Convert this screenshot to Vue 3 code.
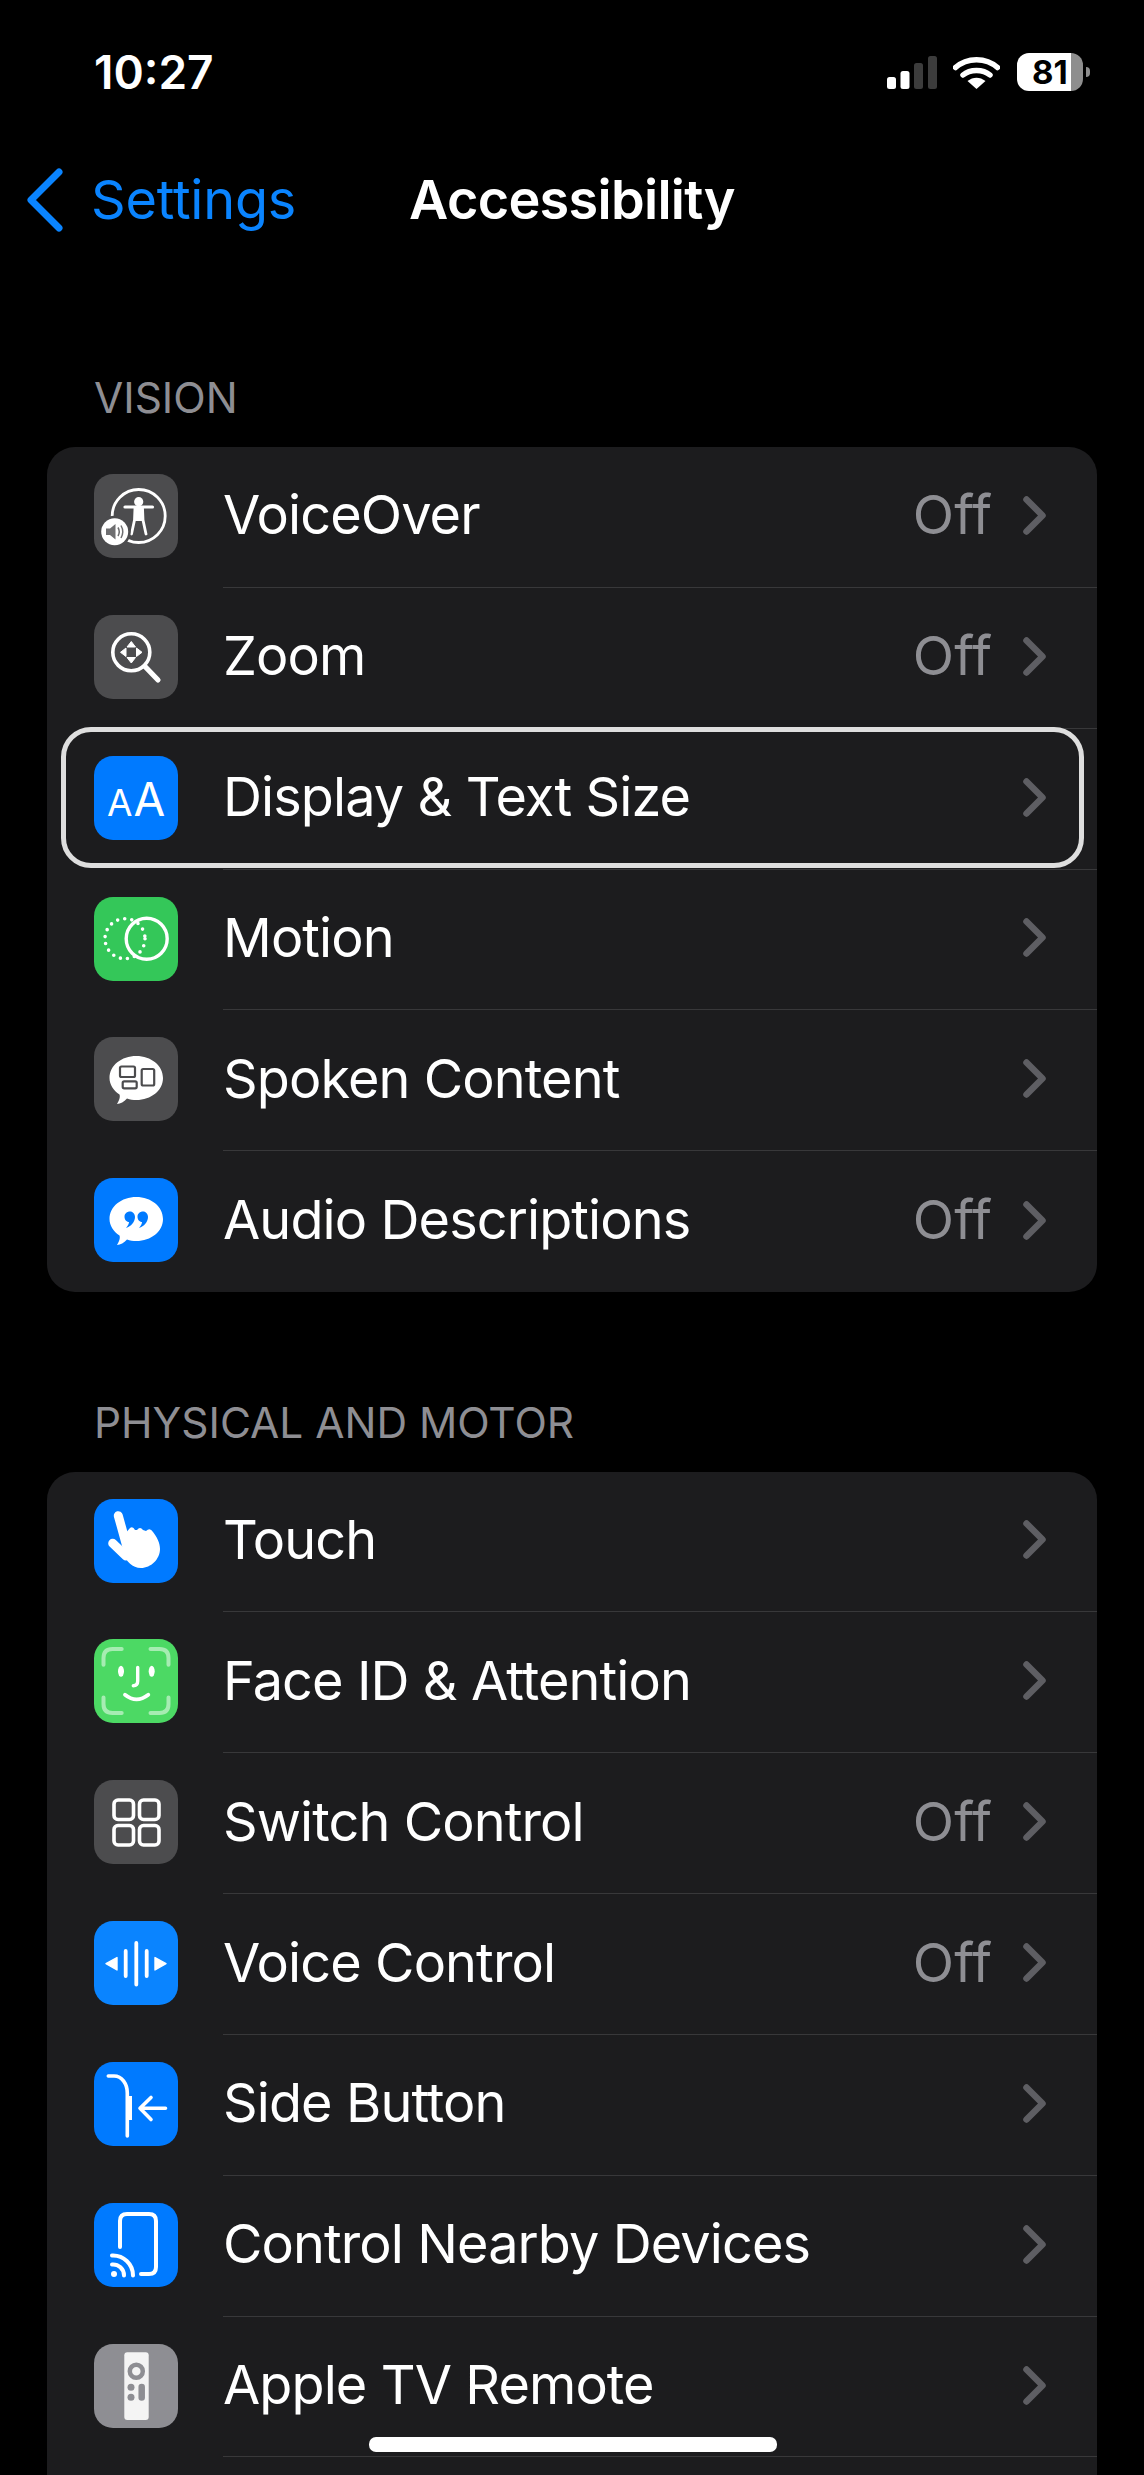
<script setup>
const vision = [
  { id: 'voiceover', label: 'VoiceOver', value: 'Off', tone: 'grey' },
  { id: 'zoom', label: 'Zoom', value: 'Off', tone: 'grey' },
  { id: 'display', label: 'Display & Text Size', value: '', tone: 'blue', focus: true },
  { id: 'motion', label: 'Motion', value: '', tone: 'green' },
  { id: 'spoken', label: 'Spoken Content', value: '', tone: 'grey' },
  { id: 'audio', label: 'Audio Descriptions', value: 'Off', tone: 'blue' },
]
const motor = [
  { id: 'touch', label: 'Touch', value: '', tone: 'blue' },
  { id: 'face', label: 'Face ID & Attention', value: '', tone: 'lime' },
  { id: 'switch', label: 'Switch Control', value: 'Off', tone: 'grey' },
  { id: 'voice', label: 'Voice Control', value: 'Off', tone: 'sky' },
  { id: 'side', label: 'Side Button', value: '', tone: 'blue' },
  { id: 'nearby', label: 'Control Nearby Devices', value: '', tone: 'blue' },
  { id: 'tv', label: 'Apple TV Remote', value: '', tone: 'silver' },
]
const sections = [
  { title: 'VISION', rows: vision },
  { title: 'PHYSICAL AND MOTOR', rows: motor },
]
</script>

<template>
  <div class="screen">
    <header class="status">
      <span class="time">10:27</span>
      <div class="status-icons">
        <svg class="signal" width="50" height="33" viewBox="0 0 50 33">
          <rect x="0" y="21" width="9" height="12" rx="2.5" fill="#fff" />
          <rect x="13.5" y="15" width="9" height="18" rx="2.5" fill="#fff" />
          <rect x="27" y="7" width="9" height="26" rx="2.5" fill="#3c3c3c" />
          <rect x="41" y="0" width="9" height="33" rx="2.5" fill="#3c3c3c" />
        </svg>
        <svg class="wifi" width="47" height="33" viewBox="0 0 47 33">
          <path d="M2.5 11.5 C14 1 33 1 44.5 11.5" fill="none" stroke="#fff" stroke-width="5.5" stroke-linecap="round" />
          <path d="M10 19 C17 13 30 13 37 19" fill="none" stroke="#fff" stroke-width="5.5" stroke-linecap="round" />
          <path d="M14.5 25 C20 20.5 27 20.5 32.5 25 L23.5 33 Z" fill="#fff" />
        </svg>
        <div class="battery">
          <div class="battery-body"><span class="battery-text">81</span></div>
          <div class="battery-tip"></div>
        </div>
      </div>
    </header>

    <nav class="nav">
      <div class="back">
        <svg width="37" height="64" viewBox="0 0 37 64">
          <path d="M33 4 L5 32 L33 60" fill="none" stroke="#0a84ff" stroke-width="7" stroke-linecap="round" stroke-linejoin="round" />
        </svg>
        <span class="back-label">Settings</span>
      </div>
      <h1 class="title">Accessibility</h1>
      <div></div>
    </nav>

    <section v-for="section in sections" :key="section.title" class="section">
      <h2 class="section-title">{{ section.title }}</h2>
      <div class="card">
        <div v-for="row in section.rows" :key="row.id" class="row">
          <div class="icon" :class="row.tone">
            <svg v-if="row.id === 'voiceover'" viewBox="0 0 84 84" width="84" height="84">
              <circle cx="44.7" cy="42" r="26.5" fill="none" stroke="#fff" stroke-width="2.8" />
              <circle cx="44.7" cy="27.7" r="4.6" fill="#fff" />
              <path d="M31 33 L58.5 33" stroke="#fff" stroke-width="3.2" stroke-linecap="round" />
              <path d="M41 34 L40.5 46 L37.5 60 M48.5 34 L49 46 L52 60" fill="none" stroke="#fff" stroke-width="2.8" stroke-linecap="round" />
              <path d="M41 34 H48.5 V47 H41 Z" fill="#fff" />
              <circle cx="20.7" cy="57.7" r="16" fill="#4c4c4e" />
              <circle cx="20.7" cy="57.7" r="13.5" fill="#fff" />
              <path d="M12 54.5 H16 L21.5 50 V65.5 L16 61 H12 Z" fill="#6e6e70" />
              <path d="M24 53.5 Q26.5 57.7 24 62 M27 51.5 Q30.5 57.7 27 64" fill="none" stroke="#6e6e70" stroke-width="1.5" />
            </svg>
            <svg v-else-if="row.id === 'zoom'" viewBox="0 0 84 84" width="84" height="84">
              <circle cx="37.3" cy="37.3" r="18.5" fill="none" stroke="#fff" stroke-width="3.6" />
              <path d="M51 51.5 L64 65" stroke="#fff" stroke-width="5.2" stroke-linecap="round" />
              <path d="M37.3 26.5 L41.5 32 H33 Z M37.3 48 L41.5 42.5 H33 Z M26.5 37.3 L32 33 V41.5 Z M48 37.3 L42.5 33 V41.5 Z" fill="#fff" stroke="#fff" stroke-width="1" stroke-linejoin="round" />
            </svg>
            <svg v-else-if="row.id === 'display'" class="aa" viewBox="0 0 84 84" width="84" height="84">
              <text x="13" y="60" class="a-small">A</text>
              <text x="39.5" y="60" class="a-big">A</text>
            </svg>
            <svg v-else-if="row.id === 'motion'" viewBox="0 0 84 84" width="84" height="84">
              <circle cx="31" cy="41.7" r="20" fill="none" stroke="#fff" stroke-width="3.6" stroke-linecap="round" stroke-dasharray="0 7.18" />
              <circle cx="52.7" cy="41.7" r="20.5" fill="none" stroke="#fff" stroke-width="3.4" />
            </svg>
            <svg v-else-if="row.id === 'spoken'" viewBox="0 0 84 84" width="84" height="84">
              <path d="M42.3 19 C57 19 69 28.5 69 41 C69 53.5 57 63 42.3 63 C39 63 36 62.5 33 61.5 C30 64.5 26.5 67 23 67 C25 64 26.5 60 25.5 57.5 C19.5 53.5 15.5 47.5 15.5 41 C15.5 28.5 27.5 19 42.3 19 Z" fill="#fff" />
              <g fill="none" stroke="#4c4c4e" stroke-width="2.2">
                <rect x="26" y="29.5" width="15" height="10.5" rx="1.5" />
                <rect x="28.7" y="44.3" width="14" height="7" rx="1.5" />
                <rect x="47.7" y="32" width="12.5" height="16.5" rx="1.5" />
              </g>
            </svg>
            <svg v-else-if="row.id === 'audio'" viewBox="0 0 84 84" width="84" height="84">
              <path d="M42.3 19 C57 19 69 28.5 69 41 C69 53.5 57 63 42.3 63 C39 63 36 62.5 33 61.5 C30 64.5 26.5 67 23 67 C25 64 26.5 60 25.5 57.5 C19.5 53.5 15.5 47.5 15.5 41 C15.5 28.5 27.5 19 42.3 19 Z" fill="#fff" />
              <path d="M36 33.5 C39 33.5 41 36 41 39 C41 44 37 48.5 32 50 C34 47.5 35 45.5 35 44 C32.5 44 30.5 41.5 30.5 38.7 C30.5 35.7 33 33.5 36 33.5 Z M49 33.5 C52 33.5 54 36 54 39 C54 44 50 48.5 45 50 C47 47.5 48 45.5 48 44 C45.5 44 43.5 41.5 43.5 38.7 C43.5 35.7 46 33.5 49 33.5 Z" fill="#007aff" />
            </svg>
            <svg v-else-if="row.id === 'touch'" viewBox="0 0 84 84" width="84" height="84">
              <path d="M24.3 16.7 L33 48" stroke="#fff" stroke-width="9" stroke-linecap="round" />
              <path d="M18.7 44.3 L32 57" stroke="#fff" stroke-width="9" stroke-linecap="round" />
              <path d="M30 36 L36 29 Q39 27 41 31 L43 31 Q46 27 49 31 L52 32 Q56 28 59 33 C63 38 66 44 66 50 C66 60 57 69 47 69 C38 69 33 62 29 56 Z" fill="#fff" />
            </svg>
            <svg v-else-if="row.id === 'face'" viewBox="0 0 84 84" width="84" height="84">
              <path d="M9.5 25.7 V19 Q9.5 10 18.5 10 H27.7 M56.5 10 H65.5 Q74.5 10 74.5 19 V25.7 M74.5 58.5 V65 Q74.5 74 65.5 74 H56.5 M27.7 74 H18.5 Q9.5 74 9.5 65 V58.5" fill="none" stroke="#fff" stroke-opacity="0.5" stroke-width="4" stroke-linecap="round" />
              <ellipse cx="27" cy="32.3" rx="3" ry="5.5" fill="#fff" />
              <ellipse cx="57.7" cy="32.3" rx="3" ry="5.5" fill="#fff" />
              <path d="M43.7 28.5 V42 Q43.7 46.7 39.3 46.7" fill="none" stroke="#fff" stroke-width="3.4" stroke-linecap="round" />
              <path d="M31 55.7 Q42.5 65 54.3 55.7" fill="none" stroke="#fff" stroke-width="3.8" stroke-linecap="round" />
            </svg>
            <svg v-else-if="row.id === 'switch'" viewBox="0 0 84 84" width="84" height="84">
              <g fill="none" stroke="#fff" stroke-width="3.6">
                <rect x="20" y="20" width="19.5" height="19.5" rx="4" />
                <rect x="45.5" y="20" width="19.5" height="19.5" rx="4" />
                <rect x="20" y="45.5" width="19.5" height="19.5" rx="4" />
                <rect x="45.5" y="45.5" width="19.5" height="19.5" rx="4" />
              </g>
            </svg>
            <svg v-else-if="row.id === 'voice'" viewBox="0 0 84 84" width="84" height="84">
              <path d="M12 42.7 L23 36.5 V49 Z M72 42.7 L61 36.5 V49 Z" fill="#fff" stroke="#fff" stroke-width="1.4" stroke-linejoin="round" />
              <path d="M42.3 22 V63.5 M31.7 30 V55 M52.7 30 V55" stroke="#fff" stroke-width="3.8" stroke-linecap="round" />
            </svg>
            <svg v-else-if="row.id === 'side'" viewBox="0 0 84 84" width="84" height="84">
              <path d="M14.3 14 H20 C28 14 33.3 22 33.3 31 V74" fill="none" stroke="#fff" stroke-width="3.6" stroke-linecap="round" />
              <rect x="33" y="34" width="5" height="24" fill="#fff" />
              <path d="M71.5 46.3 H46 M57 35.5 L46 46.3 L57 57.5" fill="none" stroke="#fff" stroke-width="3.6" stroke-linecap="round" stroke-linejoin="round" />
            </svg>
            <svg v-else-if="row.id === 'nearby'" viewBox="0 0 84 84" width="84" height="84">
              <path d="M26 44 V18 Q26 11 33 11 H55 Q62 11 62 18 V64 Q62 71 55 71 H47" fill="none" stroke="#fff" stroke-width="4" stroke-linecap="round" />
              <circle cx="20" cy="71" r="3" fill="#fff" />
              <path d="M18 61.5 A11 11 0 0 1 30 72.5 M18 52.5 A20 20 0 0 1 39 72.5" fill="none" stroke="#fff" stroke-width="4" stroke-linecap="round" />
            </svg>
            <svg v-else-if="row.id === 'tv'" viewBox="0 0 84 84" width="84" height="84">
              <rect x="30.3" y="8.3" width="24.4" height="67.7" rx="3" fill="#f4f4f4" />
              <circle cx="42.3" cy="27.3" r="6.5" fill="none" stroke="#8e8e93" stroke-width="4.5" />
              <circle cx="37" cy="43.3" r="3.5" fill="#8e8e93" />
              <circle cx="37" cy="53.3" r="3.5" fill="#8e8e93" />
              <path d="M47.7 43 V53.5" stroke="#8e8e93" stroke-width="6.5" stroke-linecap="round" />
            </svg>
          </div>
          <div class="content">
            <span class="label">{{ row.label }}</span>
            <span v-if="row.value" class="value">{{ row.value }}</span>
            <svg class="chev" width="23" height="39" viewBox="0 0 23 39">
              <path d="M3.5 3.5 L19.5 19.5 L3.5 35.5" fill="none" stroke="#5e5e63" stroke-width="6.5" stroke-linecap="round" stroke-linejoin="round" />
            </svg>
          </div>
          <div v-if="row.focus" class="focus-ring"></div>
        </div>
      </div>
    </section>

    <div class="home-bar"></div>
  </div>
</template>

<style>
html, body { margin: 0; background: #000; }
</style>

<style scoped>
.screen {
  position: relative;
  width: 1144px;
  height: 2475px;
  overflow: hidden;
  background: #000;
  color: #fff;
  font-family: Inter, "Liberation Sans", sans-serif;
}
.status {
  height: 144px;
  box-sizing: border-box;
  display: flex;
  align-items: center;
  justify-content: space-between;
  padding: 0 54px 0 94px;
}
.time {
  font-size: 46px;
  font-weight: 600;
  line-height: 1;
}
.status-icons {
  display: flex;
  align-items: center;
  gap: 16px;
}
.battery {
  display: flex;
  align-items: center;
  gap: 3px;
  margin-left: 1px;
}
.battery-body {
  width: 66px;
  height: 38px;
  border-radius: 12px;
  background: linear-gradient(to right, #fff 0 54px, #8e8e8e 54px);
  display: flex;
  align-items: center;
  padding-left: 15px;
  box-sizing: border-box;
}
.battery-text {
  color: #000;
  font-size: 33px;
  font-weight: 700;
  line-height: 1;
}
.battery-tip {
  width: 4px;
  height: 10px;
  background: #8e8e8e;
  border-radius: 0 5px 5px 0;
}
.nav {
  height: 112px;
  display: grid;
  grid-template-columns: 1fr auto 1fr;
  align-items: center;
}
.back {
  display: flex;
  align-items: center;
  padding-left: 26px;
  gap: 28px;
}
.back-label {
  color: #0a84ff;
  font-size: 54px;
  letter-spacing: -0.2px;
  line-height: 1;
}
.title {
  margin: 0;
  font-size: 54px;
  font-weight: 600;
  letter-spacing: -0.7px;
  line-height: 1;
}
.section-title {
  margin: 106.5px 0 0;
  padding: 0 94px 25px;
  color: #8e8e93;
  font-size: 42.4px;
  font-weight: 400;
  line-height: 48px;
}
.section:first-of-type .section-title {
  margin-top: 118px;
}
.card {
  margin: 0 47px;
  background: #1c1c1e;
  border-radius: 28px;
}
.section + .section .card {
  padding-bottom: 60px;
}
.row {
  position: relative;
  height: 140.85px;
  display: flex;
}
.icon {
  flex: none;
  width: 84px;
  height: 84px;
  margin: 27px 45px 0 47px;
  border-radius: 19px;
  display: flex;
  align-items: center;
  justify-content: center;
}
.grey { background: #4c4c4e; }
.blue { background: #007aff; }
.sky { background: #0a84ff; }
.green { background: #34c759; }
.lime { background: #4cd964; }
.silver { background: #8e8e93; }
.aa text {
  fill: #fff;
  font-weight: 400;
}
.a-small { font-size: 37px; }
.a-big { font-size: 46px; }
.content {
  flex: 1;
  min-width: 0;
  display: flex;
  align-items: center;
  padding: 0 51px 3px 0;
  border-bottom: 1px solid #38383a;
}
.row:last-child .content {
  border-bottom: none;
}
.section + .section .row:last-child .content {
  border-bottom: 1px solid #38383a;
}
.label {
  flex: 1;
  font-size: 54px;
  letter-spacing: -0.9px;
  line-height: 1;
  white-space: nowrap;
}
.value {
  color: #8e8e93;
  font-size: 54px;
  line-height: 1;
  margin-right: 31px;
}
.chev { flex: none; }
.focus-ring {
  position: absolute;
  left: 14px;
  right: 13px;
  top: -2px;
  height: 141px;
  box-sizing: border-box;
  border: 5px solid #dedede;
  border-radius: 30px;
}
.home-bar {
  position: absolute;
  left: 369px;
  top: 2437px;
  width: 408px;
  height: 15px;
  border-radius: 7px;
  background: #fff;
}
</style>
